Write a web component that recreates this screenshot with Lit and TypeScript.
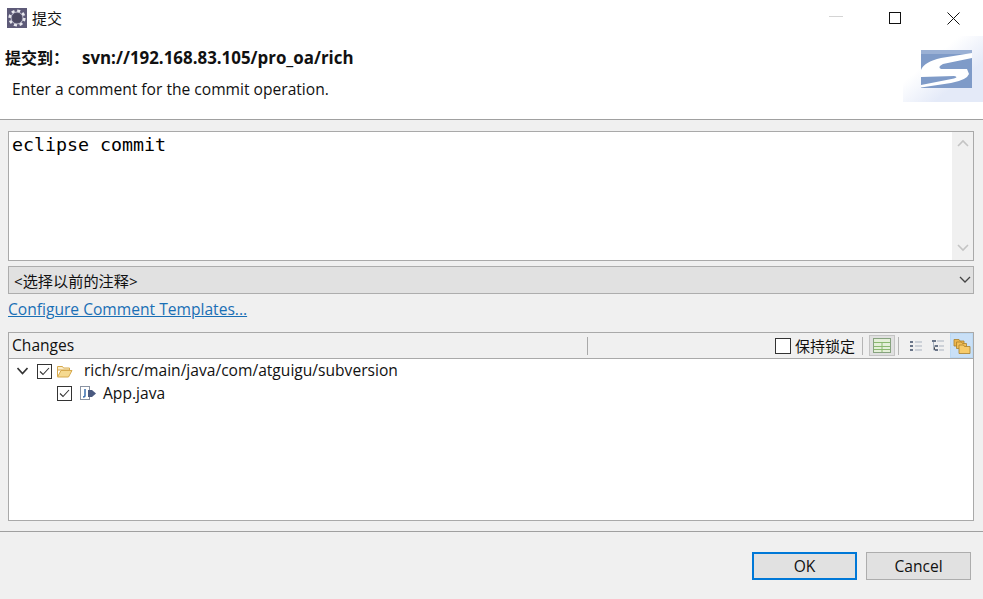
import { LitElement, html, css, svg } from "lit";
import { customElement } from "lit/decorators.js";

const check = svg`<svg class="chk" width="15" height="15" viewBox="0 0 15 15"><rect x=".5" y=".5" width="14" height="14" fill="#fff" stroke="#333"/><path d="M3 7.500 6 10.500 12 4" fill="none" stroke="#333" stroke-width="1.100"/></svg>`;

@customElement("app-root")
export class AppRoot extends LitElement {
  static styles = css`
    :host {
      display: flex;
      flex-direction: column;
      width: 983px;
      height: 599px;
      overflow: hidden;
      background: #f0f0f0;
      color: #111;
      font-family: "Open Sans", "Noto Sans CJK SC", sans-serif;
      font-size: 15.6px;
    }
    svg { display: block; flex: none; }
    .top { height: 120px; box-sizing: border-box; background: #fff; border-bottom: 1px solid #a0a0a0; flex: none; position: relative; overflow: hidden; }
    .titlebar { height: 36px; display: flex; align-items: center; padding-left: 7px; gap: 5px; font-size: 15px; }
    .titlebar .tt { margin-top: -2px; }
    .titlebar .spacer { flex: 1; }
    .winbtn { width: 59px; height: 36px; display: flex; align-items: center; justify-content: center; }
    .winbtns { display: flex; }
    .heading { font-weight: 700; height: 42px; display: flex; align-items: center; padding-left: 5px; white-space: pre; }
    .heading .c { font-size: 16px; }
    .heading .u { margin-left: 13px; font-size: 16.9px; }
    .desc { padding: 1px 0 0 12px; line-height: 20px; }
    .logo { position: absolute; right: 0; top: 36px; }
    .body { flex: 1; display: flex; flex-direction: column; padding: 11px 9px 0 8px; min-height: 0; }
    .comment { height: 130px; box-sizing: border-box; background: #fff; border: 1px solid #a9a9a9; display: flex; flex: none; }
    .comment .txt { flex: 1; font-family: "DejaVu Sans Mono", monospace; font-size: 18.3px; line-height: 26px; padding: 0 3px; color: #000; }
    .sb { width: 21px; background: #f0f0f0; display: flex; flex-direction: column; justify-content: space-between; align-items: center; padding: 7px 0 8px; box-sizing: border-box; }
    .select { margin-top: 5px; height: 28px; box-sizing: border-box; background: #e1e1e1; border: 1px solid #adadad; display: flex; align-items: center; justify-content: space-between; padding: 0 2px 0 5px; flex: none; font-size: 15.2px; }
    .link { margin-top: 3px; height: 24px; line-height: 24px; color: #1a6fb5; text-decoration: underline; flex: none; }
    .panel { margin-top: 11px; height: 189px; box-sizing: border-box; border: 1px solid #a9a9a9; background: #fff; display: flex; flex-direction: column; flex: none; }
    .phead { height: 26px; box-sizing: border-box; background: #f0f0f0; border-bottom: 1px solid #a9a9a9; display: flex; align-items: center; padding-left: 3px; flex: none; }
    .phead .name { width: 576px; box-sizing: border-box; border-right: 1px solid #a9a9a9; height: 18px; line-height: 16px; }
    .tools { flex: 1; display: flex; align-items: center; justify-content: flex-end; height: 100%; }
    .lock { display: flex; align-items: center; gap: 4px; font-size: 15px; margin-right: 5px; }
    .lock .t { margin-top: -1px; width: 62px; white-space: nowrap; }
    .box { width: 14px; height: 14px; background: #fff; border: 1px solid #333; }
    .sep { width: 1px; height: 18px; background: #b5b5b5; }
    .tbtn { width: 23px; height: 25px; display: flex; align-items: center; justify-content: center; box-sizing: border-box; }
    .tbtn.on { background: #e0e0e0; border: 1px solid #c4c4c4; width: 26px; margin: 0 3px 0 6px; height: 21px; }
    .tbtn.sel { background: #c9e0f7; border: 1px solid #bcd9f3; }
    .sep.s2 { margin-right: 5px; }
    .row { display: flex; align-items: center; }
    .row.r1 { padding-left: 8px; height: 24px; }
    .row.r2 { padding-left: 48px; height: 21px; }
    .r1 .chk { margin-left: 9px; }
    .r1 .folder { margin-left: 5px; }
    .r1 .path { margin: -2px 0 0 11px; }
    .r2 .jicon { margin-left: 7px; }
    .r2 .file { margin: -1px 0 0 6px; }
    .foot { height: 68px; box-sizing: border-box; border-top: 1px solid #a0a0a0; display: flex; align-items: flex-start; justify-content: flex-end; padding: 20px 12px 0 0; gap: 9px; flex: none; }
    .btn { width: 105px; height: 28px; box-sizing: border-box; background: #e1e1e1; border: 1px solid #adadad; display: flex; align-items: center; justify-content: center; }
    .btn.def { border: 2px solid #0078d7; }
  `;

  render() {
    return html`
      <div class="top">
        <div class="titlebar">
          <svg width="20" height="20" viewBox="0 0 20 20"><rect width="20" height="20" fill="#5d5a78"/><circle cx="10" cy="10" r="7.200" fill="none" stroke="#e8e8ee" stroke-width="2.800" stroke-dasharray="3 2.650"/><circle cx="10" cy="10" r="6" fill="#55536e"/><circle cx="10" cy="10" r="6" fill="none" stroke="#d8d8e2" stroke-width=".8"/><circle cx="10" cy="10" r="4.500" fill="#4a4860"/></svg>
          <span class="tt">提交</span>
          <span class="spacer"></span>
          <div class="winbtns">
            <div class="winbtn"><svg width="14" height="12"><path d="M0 4.500h14" stroke="#d4d4d4"/></svg></div>
            <div class="winbtn"><svg width="12" height="12"><rect x=".5" y=".5" width="11" height="11" fill="none" stroke="#111"/></svg></div>
            <div class="winbtn"><svg width="13" height="13"><path d="M.5 .5 12.500 12.500M12.500 .5 .5 12.500" stroke="#111" fill="none"/></svg></div>
          </div>
        </div>
        <div class="heading"><span class="c">提交到：</span><span class="u">svn://192.168.83.105/pro_oa/rich</span></div>
        <div class="desc">Enter a comment for the commit operation.</div>
        <svg class="logo" width="80" height="66" viewBox="0 0 80 66">
          <defs><linearGradient id="g" x1="0" y1="0" x2="1" y2="1"><stop offset=".35" stop-color="#fff"/><stop offset=".7" stop-color="#e4eaf8"/></linearGradient></defs>
          <rect width="80" height="66" fill="url(#g)"/>
          <g transform="translate(18 14)">
            <rect width="51" height="38" fill="#7f9bc8"/>
            <rect width="51" height="4" fill="#9ab0d4"/>
            <path d="M51 3 20 8Q3 12 0 20V27L33 26Q38 27 33 28.500L0 35V37.500L30 33Q46 30 48 24L46 19H20Q16 17 22 14L51 8Z" fill="#fff"/>
          </g>
        </svg>
      </div>
      <div class="body">
        <div class="comment">
          <div class="txt">eclipse commit</div>
          <div class="sb">
            <svg width="12" height="8"><path d="M1 7 6 2 11 7" fill="none" stroke="#c4c4c4" stroke-width="1.600"/></svg>
            <svg width="12" height="8"><path d="M1 1 6 6 11 1" fill="none" stroke="#c4c4c4" stroke-width="1.600"/></svg>
          </div>
        </div>
        <div class="select"><span>&lt;选择以前的注释&gt;</span><svg width="12" height="8"><path d="M1 1 6 6 11 1" fill="none" stroke="#444" stroke-width="1.300"/></svg></div>
        <div class="link">Configure Comment Templates...</div>
        <div class="panel">
          <div class="phead">
            <div class="name">Changes</div>
            <div class="tools">
              <div class="lock"><span class="box"></span><span class="t">保持锁定</span></div>
              <span class="sep"></span>
              <div class="tbtn on"><svg width="18" height="15"><rect x=".5" y=".5" width="17" height="14" fill="#e4efd8" stroke="#87a37f"/><path d="M1 4.500h16M1 8.500h16M1 11.500h16M9 5v9" stroke="#8ab86f"/></svg></div>
              <span class="sep s2"></span>
              <div class="tbtn"><svg width="12" height="14"><path d="M0 2h3v2H0zM0 6h3v2H0zM0 10h3v2H0z" fill="#6a7588"/><path d="M5 3h7M5 7h7M5 11h7" stroke="#a9b2bf"/></svg></div>
              <div class="tbtn"><svg width="13" height="14"><path d="M0 1h4v2H0zM3 6h3v2H3zM3 10h3v2H3z" fill="#6a7588"/><path d="M1.500 3V11H3M1.500 7H3M7 7h5M7 11h5M5 2h7" stroke="#a9b2bf"/></svg></div>
              <div class="tbtn sel"><svg width="18" height="18"><path d="M1 2.500h5l1 1.500h4v5H1z" fill="#eeb64c" stroke="#a9802c" stroke-width=".8"/><path d="M3.500 5h5l1 1.500h4v5h-10z" fill="#f2bf58" stroke="#a9802c" stroke-width=".8"/><path d="M6 8h4.500l1 1.500h5.500v7H6z" fill="#f7cb6a" stroke="#a9802c" stroke-width=".8"/></svg></div>
            </div>
          </div>
          <div class="tree">
            <div class="row r1">
              <svg width="11" height="8"><path d="M.5 1 5.500 6.500 10.500 1" fill="none" stroke="#333" stroke-width="1.600"/></svg>
              ${check}
              <svg class="folder" width="16" height="13"><path d="M.5 1.500h5l1 1.500h6v2H.5zM.5 11.500V5" fill="#fbeecb" stroke="#d6a94d"/><path d="M.5 12h11l3.500-6.500H4z" fill="#f5d98f" stroke="#d6a94d"/></svg>
              <span class="path">rich/src/main/java/com/atguigu/subversion</span>
            </div>
            <div class="row r2">
              ${check}
              <svg class="jicon" width="18" height="15"><rect x="1.500" y=".5" width="9" height="13" fill="#fff" stroke="#8a93a3"/><path d="M6 3v6.500q0 1.500-2 1.500" fill="none" stroke="#3a6fb0" stroke-width="1.500"/><path d="M9 4h4l4 3.500-4 3.500H9z" fill="#4a5a80"/></svg>
              <span class="file">App.java</span>
            </div>
          </div>
        </div>
      </div>
      <div class="foot">
        <div class="btn def">OK</div>
        <div class="btn">Cancel</div>
      </div>
    `;
  }
}
